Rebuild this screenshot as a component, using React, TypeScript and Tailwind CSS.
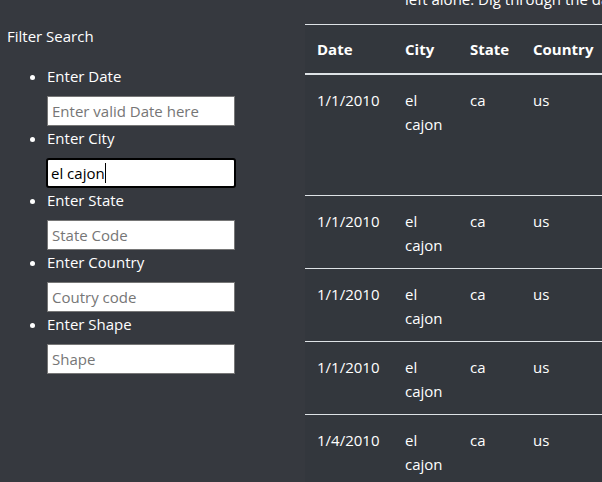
import React from "react";

const rows = [
  { date: "1/1/2010", tall: true },
  { date: "1/1/2010" },
  { date: "1/1/2010" },
  { date: "1/1/2010" },
  { date: "1/4/2010" },
];

const fields = [
  { label: "Enter Date", ph: "Enter valid Date here" },
  { label: "Enter City", ph: "", value: "el cajon", focus: true },
  { label: "Enter State", ph: "State Code" },
  { label: "Enter Country", ph: "Coutry code" },
  { label: "Enter Shape", ph: "Shape" },
];

export default function App() {
  return (
    <div
      className="w-[602px] h-[482px] overflow-hidden bg-[#36393f] text-white flex"
      style={{ fontFamily: '"Open Sans", "Noto Sans", sans-serif' }}
    >
      <div className="w-[305px] shrink-0 pt-[24px] text-[15px] leading-[24px]">
        <div className="pl-[7px]">Filter Search</div>
        <ul className="list-disc pl-[47px] mt-[16px]">
          {fields.map((f) => (
            <li key={f.label}>
              <div>{f.label}</div>
              <div className="pt-[8px]">
                {f.focus ? (
                  <div className="w-[190px] h-[30px] -ml-[1px] rounded-[3px] border-2 border-black bg-white text-black flex items-center pl-[3px]">
                    <span>el cajon</span>
                    <span className="inline-block w-[1px] h-[20px] bg-black"></span>
                  </div>
                ) : (
                  <div className="w-[188px] h-[30px] border border-[#767676] bg-white text-[#767676] flex items-center pl-[4px]">
                    {f.ph}
                  </div>
                )}
              </div>
            </li>
          ))}
        </ul>
      </div>
      <div className="flex-1 min-w-0">
        <p className="-mt-[13px] h-[37px] pl-[100px] leading-[24px] text-[15px] whitespace-nowrap">
          left alone. Dig through the data
        </p>
        <div className="bg-[#33373d] w-[420px] text-[15px] leading-[24px]">
          <div className="border-t border-[#dee2e6] flex font-bold border-b-2 h-[51px]">
            <div className="w-[88px] pl-[12px] pt-[12px]">Date</div>
            <div className="w-[65px] pl-[12px] pt-[12px]">City</div>
            <div className="w-[63px] pl-[12px] pt-[12px]">State</div>
            <div className="w-[100px] pl-[12px] pt-[12px]">Country</div>
          </div>
          {rows.map((r, i) => (
            <div
              key={i}
              className={`flex border-b border-[#dee2e6] ${r.tall ? "h-[121px]" : "h-[73px]"}`}
            >
              <div className="w-[88px] pl-[12px] pt-[13px]">{r.date}</div>
              <div className="w-[65px] pl-[12px] pt-[13px]">
                el
                <br />
                cajon
              </div>
              <div className="w-[63px] pl-[12px] pt-[13px]">ca</div>
              <div className="w-[100px] pl-[12px] pt-[13px]">us</div>
            </div>
          ))}
        </div>
      </div>
    </div>
  );
}
